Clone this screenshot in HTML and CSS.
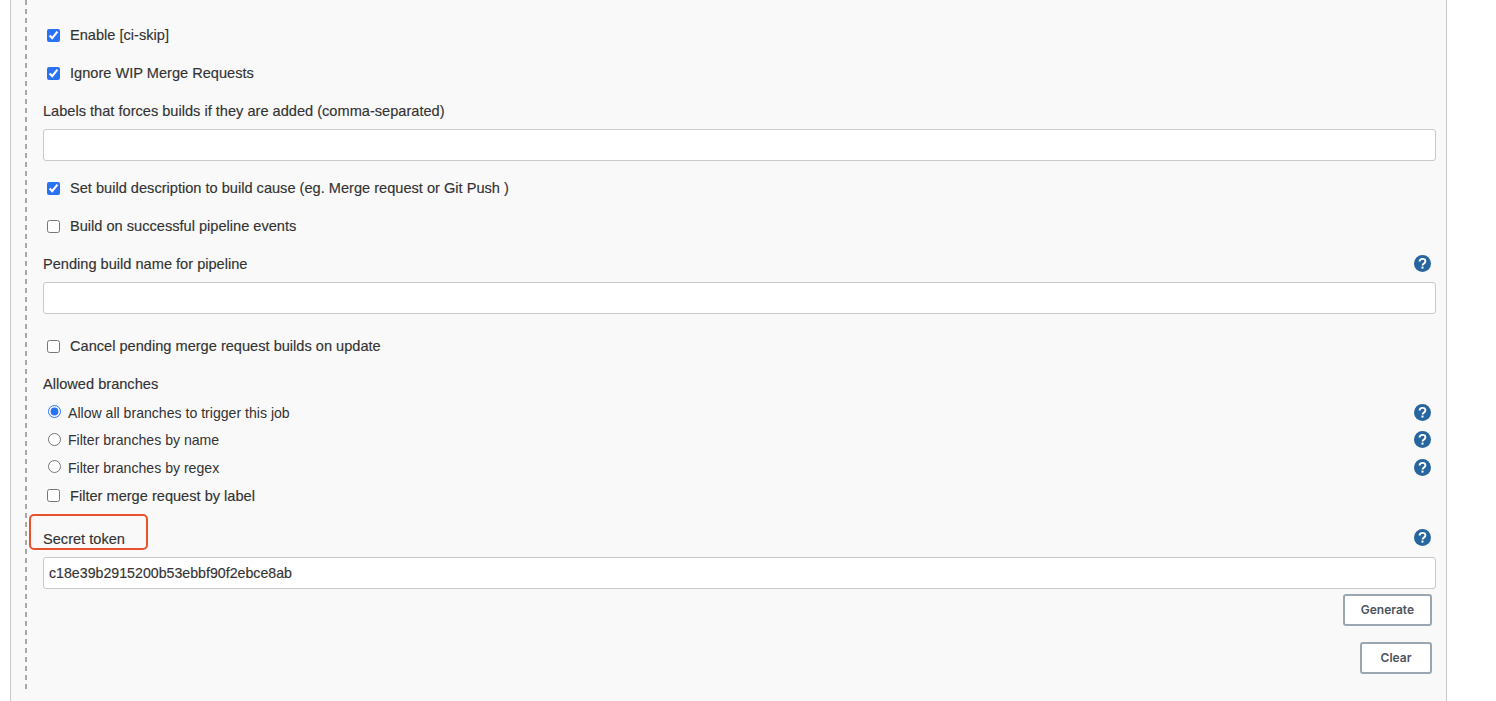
FILE: index.html
```
<!DOCTYPE html>
<html lang="en">
<head>
<meta charset="utf-8">
<title>Job configuration</title>
<link rel="stylesheet" href="styles.css">
</head>
<body>
<svg class="sprite" width="0" height="0" aria-hidden="true">
  <symbol id="help" viewBox="0 0 17 17">
    <circle cx="8.5" cy="8.5" r="8.5" fill="#27659f"/>
    <path d="M5.6 6.6c0-1.7 1.3-2.7 2.9-2.7 1.7 0 2.9 1 2.9 2.4 0 1.2-.7 1.8-1.5 2.3-.8.5-1.3.9-1.3 1.8" fill="none" stroke="#fff" stroke-width="1.9"/>
    <rect x="7.5" y="11.6" width="2" height="2" fill="#fff"/>
  </symbol>
</svg>
<main class="panel">
  <div class="section">
    <label class="row check"><input type="checkbox" checked><span>Enable [ci-skip]</span></label>
    <label class="row check"><input type="checkbox" checked><span>Ignore WIP Merge Requests</span></label>
    <div class="row field-label"><span>Labels that forces builds if they are added (comma-separated)</span></div>
    <input class="text" type="text">
    <label class="row check after-input"><input type="checkbox" checked><span>Set build description to build cause (eg. Merge request or Git Push )</span></label>
    <label class="row check"><input type="checkbox"><span>Build on successful pipeline events</span></label>
    <div class="row field-label"><span>Pending build name for pipeline</span><svg class="help"><use href="#help"/></svg></div>
    <input class="text" type="text">
    <label class="row check after-input-wide"><input type="checkbox"><span>Cancel pending merge request builds on update</span></label>
    <div class="row group-label"><span>Allowed branches</span></div>
    <label class="row radio"><input type="radio" name="branches" checked><span>Allow all branches to trigger this job</span><svg class="help"><use href="#help"/></svg></label>
    <label class="row radio"><input type="radio" name="branches"><span>Filter branches by name</span><svg class="help"><use href="#help"/></svg></label>
    <label class="row radio"><input type="radio" name="branches"><span>Filter branches by regex</span><svg class="help"><use href="#help"/></svg></label>
    <label class="row check filter"><input type="checkbox"><span>Filter merge request by label</span></label>
    <div class="row field-label secret">
      <span>Secret token</span><svg class="help"><use href="#help"/></svg>
      <div class="highlight"></div>
    </div>
    <input class="text" type="text" value="c18e39b2915200b53ebbf90f2ebce8ab">
    <div class="actions">
      <button class="btn" type="button">Generate</button>
      <button class="btn btn-clear" type="button">Clear</button>
    </div>
  </div>
</main>
</body>
</html>
```
FILE: styles.css
```
* { box-sizing: border-box; }
html, body { margin: 0; padding: 0; height: 701px; overflow: hidden; background: #fff; }
body { font-family: "Liberation Sans", Arial, sans-serif; font-size: 14.6px; color: #333; -webkit-text-stroke: 0.15px #333; }
.sprite { position: absolute; }

.panel {
  width: 1437px;
  height: 701px;
  margin-left: 10px;
  background: #f9f9f9;
  border-left: 1px solid #c8c8c8;
  border-right: 1px solid #c8c8c8;
  padding-left: 14px;
}
.section {
  height: 690px;
  width: 1411px;
  padding: 16px 0 0 18px;
  display: flex;
  flex-direction: column;
  background: repeating-linear-gradient(to bottom, #a8a8a8 0 5px, transparent 5px 9px) left top / 2px 100% no-repeat;
}
.row { display: flex; align-items: center; flex: none; }
.row > span { flex: 1; }
.check { height: 38px; padding-left: 4px; }
.check input { width: 13px; height: 13px; margin: 0 10px 0 0; accent-color: #2a72f5; }
.after-input { margin-top: 8px; }
.after-input-wide { margin-top: 13px; }
.field-label { height: 37px; }
.group-label { height: 34px; padding-top: 4px; }
.radio { height: 27.5px; padding-left: 5px; font-size: 14.1px; -webkit-text-stroke: 0; }
.radio input { width: 13px; height: 13px; margin: 0 7px 2px 0; accent-color: #2a72f5; }
.radio .help { margin-bottom: 1px; }
.filter { height: 28px; }
.help { width: 17px; height: 17px; margin-right: 5px; flex: none; }
.secret { position: relative; margin-top: 10px; }
.secret > span { padding-top: 1px; }
.secret .help { margin-bottom: 1px; }
.highlight {
  position: absolute;
  left: -14px;
  top: -6px;
  width: 119px;
  height: 36px;
  border: 2.5px solid #e8522c;
  border-radius: 5px;
  pointer-events: none;
}
.text {
  flex: none;
  display: block;
  width: 1393px;
  height: 32px;
  padding: 0 5px;
  background: #fff;
  border: 1px solid #c9c9c9;
  border-radius: 3px;
  font: 14.2px "Liberation Sans", Arial, sans-serif;
  color: #333;
  outline: none;
}
.actions { display: flex; flex-direction: column; align-items: flex-end; gap: 16px; margin-top: 5px; padding-right: 4px; }
.btn {
  height: 32px;
  padding: 0 16px;
  background: #fff;
  border: 2px solid #9aa7b2;
  border-radius: 3px;
  font: 600 12px Inter, "Liberation Sans", sans-serif;
  color: #4d545d;
  -webkit-text-stroke: 0;
}
.btn-clear { min-width: 72px; }
```
